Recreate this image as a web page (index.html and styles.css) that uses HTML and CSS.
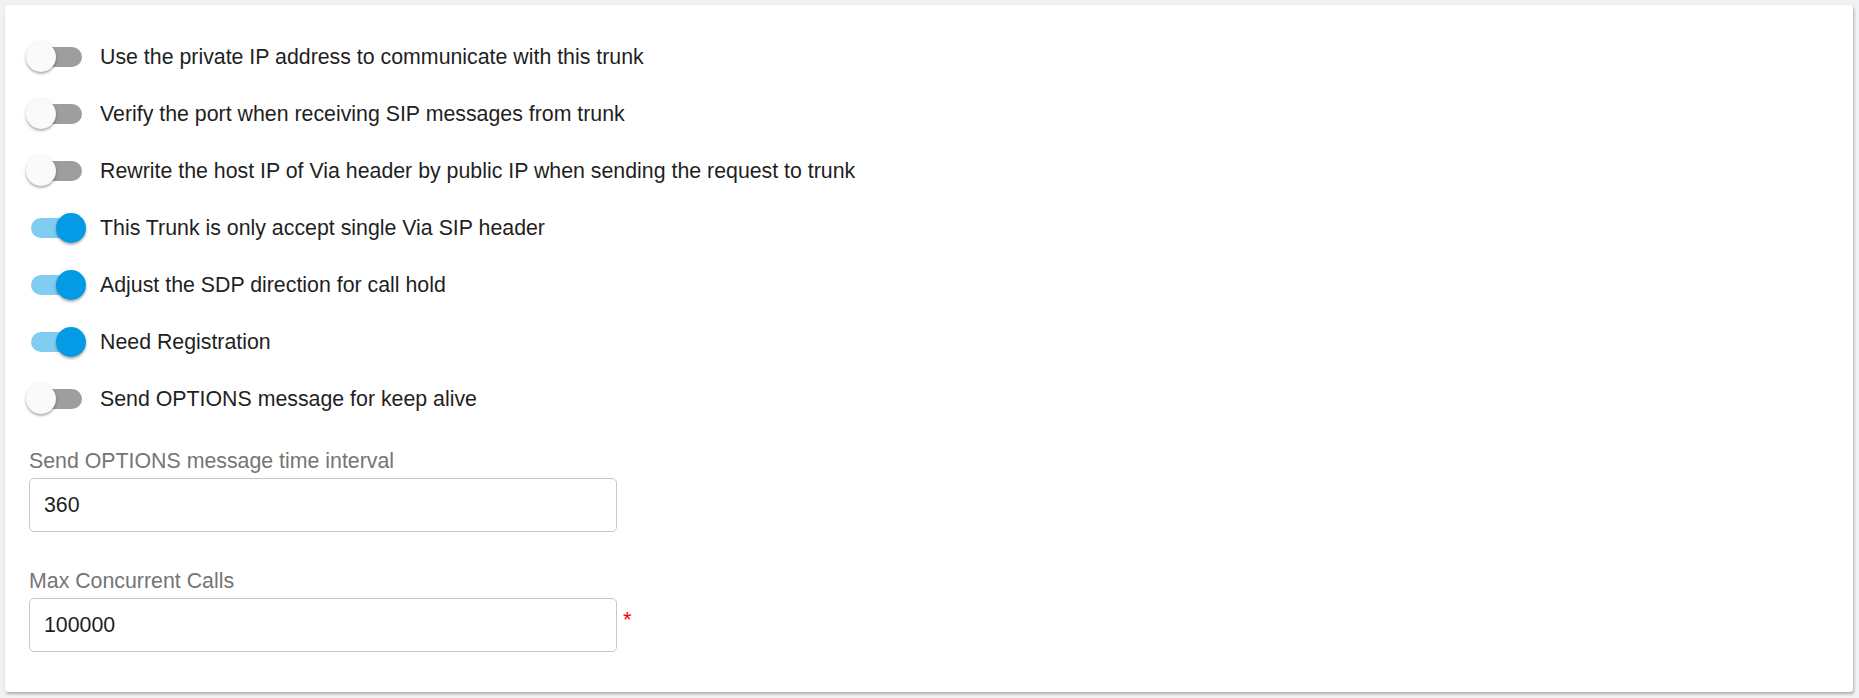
FILE: index.html
```html
<!DOCTYPE html>
<html lang="en">
<head>
<meta charset="utf-8">
<title>Trunk settings</title>
<link rel="stylesheet" href="styles.css">
</head>
<body>
<div class="card">
  <div class="switch-row"><span class="switch"><span class="track"></span><span class="thumb"></span></span><span class="switch-label">Use the private IP address to communicate with this trunk</span></div>
  <div class="switch-row"><span class="switch"><span class="track"></span><span class="thumb"></span></span><span class="switch-label">Verify the port when receiving SIP messages from trunk</span></div>
  <div class="switch-row"><span class="switch"><span class="track"></span><span class="thumb"></span></span><span class="switch-label">Rewrite the host IP of Via header by public IP when sending the request to trunk</span></div>
  <div class="switch-row"><span class="switch on"><span class="track"></span><span class="thumb"></span></span><span class="switch-label">This Trunk is only accept single Via SIP header</span></div>
  <div class="switch-row"><span class="switch on"><span class="track"></span><span class="thumb"></span></span><span class="switch-label">Adjust the SDP direction for call hold</span></div>
  <div class="switch-row"><span class="switch on"><span class="track"></span><span class="thumb"></span></span><span class="switch-label">Need Registration</span></div>
  <div class="switch-row"><span class="switch"><span class="track"></span><span class="thumb"></span></span><span class="switch-label">Send OPTIONS message for keep alive</span></div>

  <div class="field first">
    <label class="field-label">Send OPTIONS message time interval</label>
    <div class="field-control">
      <div class="input">360</div>
    </div>
  </div>
  <div class="field second">
    <label class="field-label">Max Concurrent Calls</label>
    <div class="field-control">
      <div class="input">100000</div>
      <span class="required">*</span>
    </div>
  </div>
</div>
</body>
</html>
```

FILE: styles.css
```css
html, body {
  margin: 0;
  padding: 0;
}
body {
  background: #f1f2f4;
  padding: 5px 6px 6px 5px;
  font-family: "Liberation Sans", Arial, sans-serif;
  color: #212121;
}
.card {
  background: #fff;
  border-radius: 3px;
  box-shadow: 1px 2px 3px rgba(0, 0, 0, 0.28), 0 0 2px rgba(0, 0, 0, 0.06);
  padding: 23px 21px 39px 21px;
  height: 687px;
  box-sizing: border-box;
}
.switch-row {
  display: flex;
  align-items: center;
  height: 57px;
  gap: 14px;
}
.switch {
  position: relative;
  width: 60px;
  height: 30px;
  flex: none;
}
.track {
  position: absolute;
  left: 5px;
  top: 5px;
  width: 51px;
  height: 20px;
  border-radius: 10px;
  background: #9e9e9e;
}
.thumb {
  position: absolute;
  left: 0;
  top: 0;
  width: 30px;
  height: 30px;
  border-radius: 50%;
  background: #fafafa;
  box-shadow: 0 2px 2px rgba(0, 0, 0, 0.22), 0 1px 4px rgba(0, 0, 0, 0.14);
}
.switch.on .track {
  background: #81cdf2;
}
.switch.on .thumb {
  left: 30px;
  background: #039be5;
}
.switch-label {
  font-size: 21.33px;
  line-height: 24px;
  color: #1f1f1f;
}
.field {
  display: flex;
  flex-direction: column;
  gap: 5px;
}
.field.first {
  margin-top: 22px;
}
.field.second {
  margin-top: 37px;
}
.field-label {
  font-size: 21.33px;
  line-height: 24px;
  color: #757575;
  padding-left: 3px;
}
.field-control {
  display: flex;
  align-items: flex-start;
  padding-left: 3px;
}
.input {
  width: 588px;
  height: 54px;
  box-sizing: border-box;
  border: 1px solid #c6c6c6;
  border-radius: 5px;
  padding: 0 14px;
  display: flex;
  align-items: center;
  font-size: 21.33px;
  color: #1f1f1f;
}
.required {
  color: #ff0000;
  font-size: 22px;
  line-height: 24px;
  margin-left: 6px;
  margin-top: 10px;
}
```
